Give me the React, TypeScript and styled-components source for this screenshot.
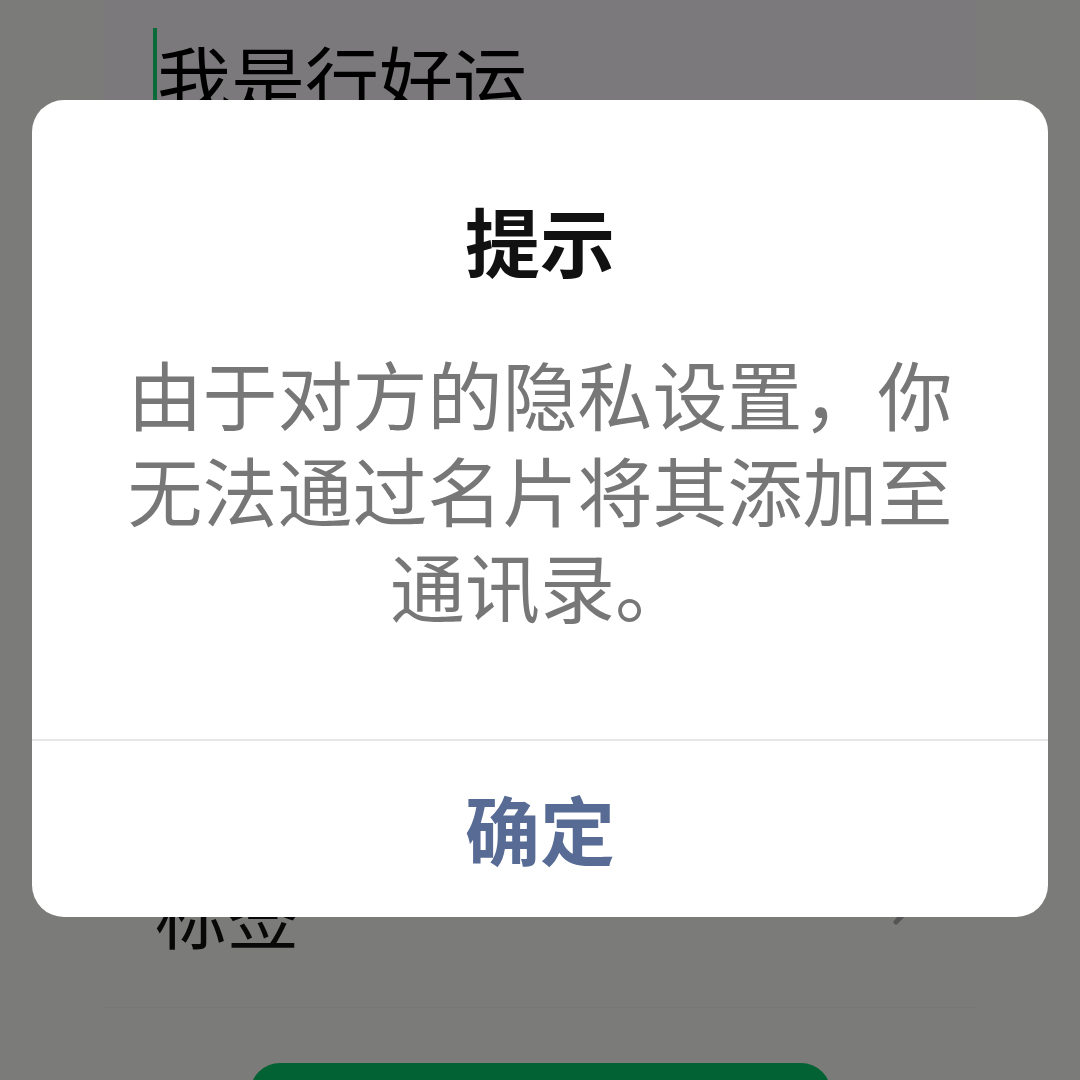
import React from "react";
import styled, { createGlobalStyle } from "styled-components";

const GlobalStyle = createGlobalStyle`
  html, body {
    margin: 0;
    padding: 0;
    background: #f7f8f3;
    font-family: "Noto Sans CJK SC", "Noto Sans", sans-serif;
    overflow: hidden;
  }
`;

const Page = styled.div`
  width: 1080px;
  height: 1080px;
  background: #f7f8f3;
  overflow: hidden;
`;

const Column = styled.div`
  width: 874px;
  margin: 0 auto;
  display: flex;
  flex-direction: column;
`;

const InputCard = styled.div`
  height: 260px;
  background: #f6f2f6;
  padding: 28px 50px 0;
  box-sizing: border-box;
  display: flex;
  align-items: flex-start;
`;

const Caret = styled.span`
  width: 4px;
  height: 100px;
  background: #15d671;
  flex-shrink: 0;
`;

const InputText = styled.span`
  margin-top: 12px;
  font-size: 74px;
  line-height: 1;
  color: #000;
`;

const Spacer = styled.div`
  height: 556px;
`;

const ListRow = styled.div`
  height: 192px;
  padding: 0 52px;
  display: flex;
  align-items: center;
  justify-content: space-between;
  border-bottom: 1px solid #f0f0ea;
  box-sizing: border-box;
`;

const RowLabel = styled.span`
  font-size: 72px;
  line-height: 1;
  color: #111;
`;

const Chevron = styled.svg`
  width: 26px;
  height: 46px;
  margin-right: 6px;
  margin-top: -20px;
`;

const PrimaryButton = styled.button`
  margin: 55px auto 0;
  width: 581px;
  height: 140px;
  border: none;
  border-radius: 30px;
  background: #07c467;
`;

const Mask = styled.div`
  position: fixed;
  inset: 0;
  background: rgba(0, 0, 0, 0.5);
  padding: 100px 32px 0;
  box-sizing: border-box;
`;

const Dialog = styled.div`
  width: 1016px;
  height: 817px;
  background: #fff;
  border-radius: 32px;
  display: flex;
  flex-direction: column;
  overflow: hidden;
`;

const DialogBody = styled.div`
  flex: 1;
  padding: 87px 80px 0;
  text-align: center;
`;

const Title = styled.div`
  font-size: 75px;
  line-height: 105px;
  font-weight: 700;
  color: #111;
`;

const Message = styled.div`
  margin-top: 53px;
  font-size: 75px;
  line-height: 96px;
  color: #777;
`;

const DialogFooter = styled.div`
  height: 176px;
  border-top: 2px solid #e6e6e6;
  display: flex;
  align-items: center;
  justify-content: center;
`;

const ConfirmText = styled.span`
  font-size: 75px;
  line-height: 1;
  font-weight: 700;
  color: #576b95;
  margin-top: -4px;
`;

export default function App() {
  return (
    <>
      <GlobalStyle />
      <Page>
        <Column>
          <InputCard>
            <Caret />
            <InputText>我是行好运</InputText>
          </InputCard>
          <Spacer />
          <ListRow>
            <RowLabel>标签</RowLabel>
            <Chevron viewBox="0 0 26 46">
              <path d="M3 3 L22 23 L3 43" fill="none" stroke="#aaa" strokeWidth="5" strokeLinecap="round" strokeLinejoin="round" />
            </Chevron>
          </ListRow>
          <PrimaryButton aria-label="发消息" />
        </Column>
      </Page>
      <Mask>
        <Dialog>
          <DialogBody>
            <Title>提示</Title>
            <Message>由于对方的隐私设置，你无法通过名片将其添加至通讯录。</Message>
          </DialogBody>
          <DialogFooter>
            <ConfirmText>确定</ConfirmText>
          </DialogFooter>
        </Dialog>
      </Mask>
    </>
  );
}
